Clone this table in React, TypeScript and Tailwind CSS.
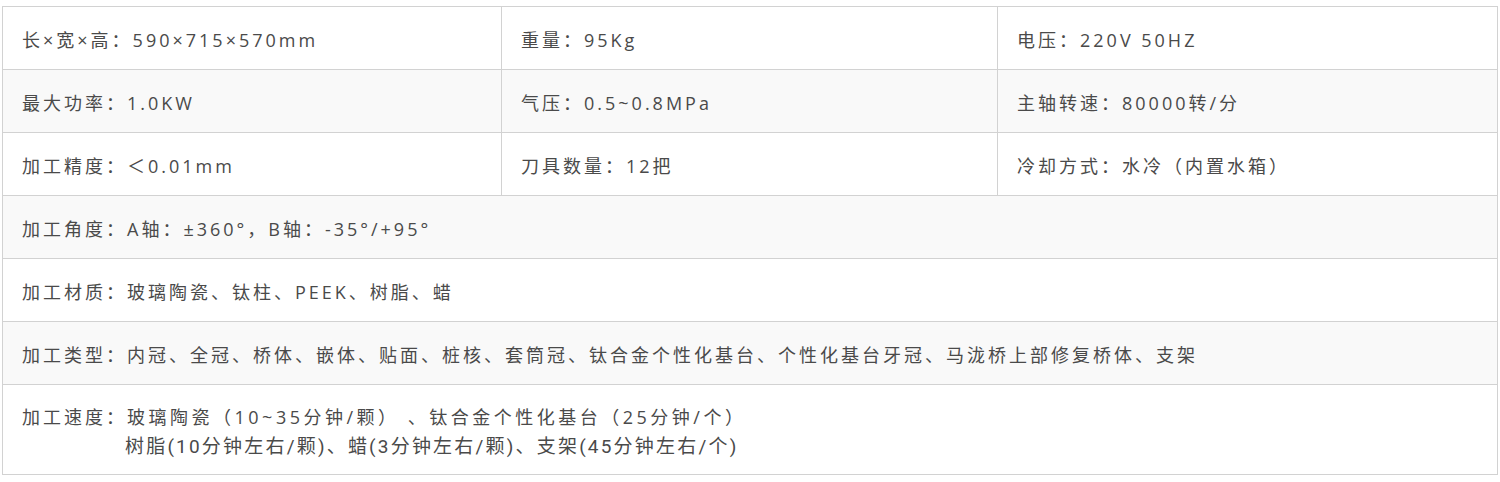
import React from "react";

const font = "font-['Open_Sans','Noto_Sans_CJK_SC',sans-serif]";

// three-column spec rows
const gridRows: string[][] = [
  ["长×宽×高：590×715×570mm", "重量：95Kg", "电压：220V 50HZ"],
  ["最大功率：1.0KW", "气压：0.5~0.8MPa", "主轴转速：80000转/分"],
  ["加工精度：＜0.01mm", "刀具数量：12把", "冷却方式：水冷（内置水箱）"],
];

const wideRows = [
  "加工角度：A轴：±360°，B轴：-35°/+95°",
  "加工材质：玻璃陶瓷、钛柱、PEEK、树脂、蜡",
  "加工类型：内冠、全冠、桥体、嵌体、贴面、桩核、套筒冠、钛合金个性化基台、个性化基台牙冠、马泷桥上部修复桥体、支架",
];

const colWidths = ["w-[499px]", "w-[496px]", "w-[500px]"];

export default function App() {
  return (
    <div className={`min-h-screen bg-white pt-[6px] pl-[2px] ${font}`}>
      <div className="w-[1496px] border-l border-t border-[#d2d2d2] text-[18px] text-[#4a4a4a] tracking-[3px]">
        {gridRows.map((row, i) => (
          <div key={i} className={`flex h-[63px] ${i % 2 === 1 ? "bg-[#f9f9f9]" : "bg-white"}`}>
            {row.map((cell, j) => (
              <div
                key={j}
                className={`${colWidths[j]} flex items-center border-r border-b border-[#d2d2d2] pl-[19px] pt-[5px]`}
              >
                {cell}
              </div>
            ))}
          </div>
        ))}

        {wideRows.map((text, i) => (
          <div
            key={i}
            className={`flex h-[63px] items-center border-r border-b border-[#d2d2d2] pl-[19px] pt-[5px] ${
              i % 2 === 0 ? "bg-[#f9f9f9]" : "bg-white"
            }`}
          >
            {text}
          </div>
        ))}

        {/* speed row, two lines */}
        <div className="flex h-[90px] border-r border-b border-[#d2d2d2] bg-white pl-[19px] pt-[17px]">
          <span className="leading-[30px]">加工速度：</span>
          <div className="flex flex-col leading-[30px]">
            <span className="tracking-[3.5px]">玻璃陶瓷（10~35分钟/颗） 、钛合金个性化基台（25分钟/个）</span>
            <span className="-ml-[2px] font-['Roboto','Noto_Sans_CJK_SC',sans-serif] text-[19px] tracking-[2.2px]">
              树脂(10分钟左右/颗)、蜡(3分钟左右/颗)、支架(45分钟左右/个)
            </span>
          </div>
        </div>
      </div>
    </div>
  );
}
